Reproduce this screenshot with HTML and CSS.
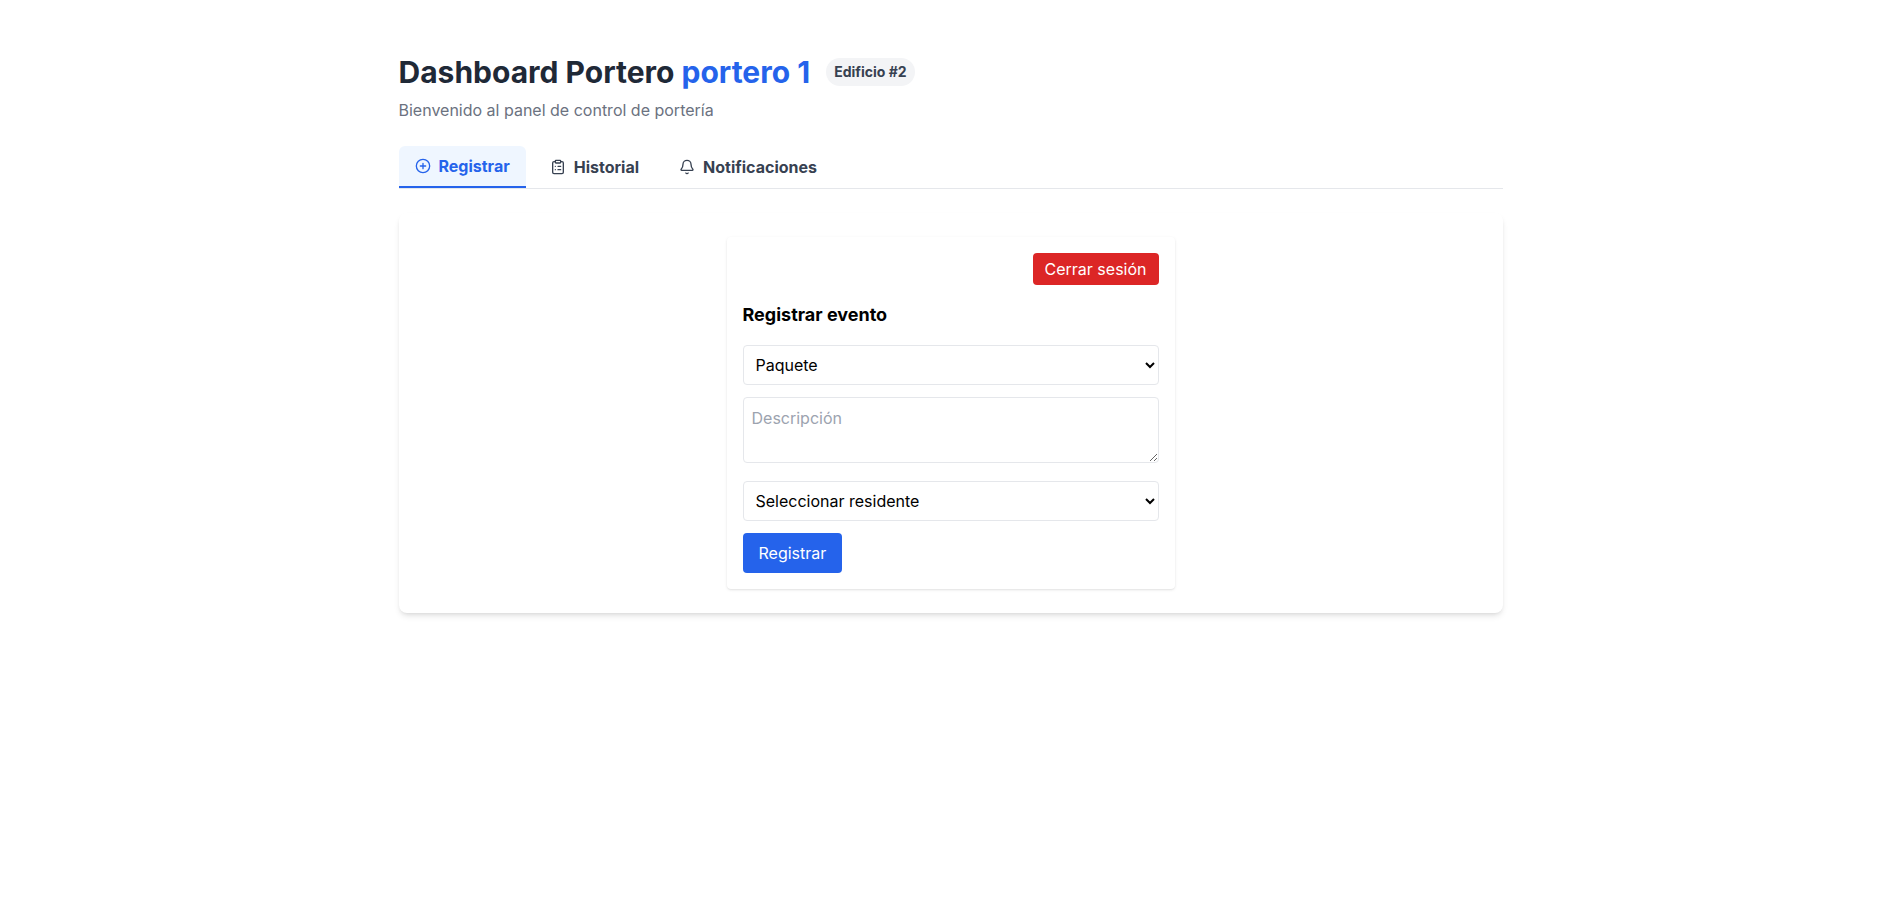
FILE: index.html
```html
<!DOCTYPE html>
<html lang="es">
<head>
<meta charset="utf-8">
<title>Dashboard Portero</title>
<link rel="stylesheet" href="styles.css">
</head>
<body>
<main class="page">
  <header class="header">
    <div class="title-row">
      <h1 class="title">Dashboard Portero <span class="title-name">portero 1</span></h1>
      <span class="badge">Edificio #2</span>
    </div>
    <p class="subtitle">Bienvenido al panel de control de portería</p>
  </header>
  <nav class="tabs">
    <button class="tab tab-active" type="button">
      <svg class="icon" viewBox="0 0 24 24"><circle cx="12" cy="12" r="10"/><path d="M12 8v8M8 12h8"/></svg>
      Registrar
    </button>
    <button class="tab" type="button">
      <svg class="icon" viewBox="0 0 24 24"><rect x="8" y="2" width="8" height="4" rx="1"/><path d="M16 4h2a2 2 0 0 1 2 2v14a2 2 0 0 1-2 2H6a2 2 0 0 1-2-2V6a2 2 0 0 1 2-2h2M12 11h4M12 16h4M8 11h.01M8 16h.01"/></svg>
      Historial
    </button>
    <button class="tab" type="button">
      <svg class="icon" viewBox="0 0 24 24"><path d="M10.268 21a2 2 0 0 0 3.464 0M3.262 15.326A1 1 0 0 0 4 17h16a1 1 0 0 0 .74-1.673C19.41 13.956 18 12.499 18 8A6 6 0 0 0 6 8c0 4.499-1.411 5.956-2.738 7.326"/></svg>
      Notificaciones
    </button>
  </nav>
  <section class="panel">
    <div class="card">
      <div class="card-top"><button class="logout" type="button">Cerrar sesión</button></div>
      <h2 class="card-title">Registrar evento</h2>
      <form class="form">
        <select class="field select"><option>Paquete</option></select>
        <textarea class="field area" placeholder="Descripción" rows="2"></textarea>
        <select class="field select"><option>Seleccionar residente</option></select>
        <button class="submit" type="button">Registrar</button>
      </form>
    </div>
  </section>
</main>
</body>
</html>
```
FILE: styles.css
```css
*, *::before, *::after { box-sizing: border-box; }
body {
  margin: 0;
  padding-left: 8px;
  background: #fff;
  color: #000;
  font: 16px/24px Inter, "Liberation Sans", sans-serif;
}
h1, h2, p { margin: 0; }
button, select, textarea { margin: 0; font: inherit; color: inherit; }
button { border: 0; background: transparent; }

.page { max-width: 1152px; margin: 0 auto; padding: 54px 24px 24px; }
.header { margin-bottom: 24px; }
.title-row { display: flex; align-items: center; gap: 16px; height: 36px; }
.title { font-size: 30px; line-height: 36px; font-weight: 700; color: #1f2937; }
.title-name { color: #2563eb; }
.badge {
  padding: 4px 8px;
  border-radius: 999px;
  background: #f3f4f6;
  color: #374151;
  font-size: 14px;
  line-height: 20px;
  font-weight: 700;
}
.subtitle { margin-top: 8px; color: #6b7280; }

.tabs { display: flex; gap: 8px; margin-bottom: 24px; border-bottom: 1px solid #e5e7eb; }
.tab {
  display: flex;
  align-items: center;
  gap: 8px;
  padding: 8px 16px;
  border-radius: 6px 6px 0 0;
  color: #374151;
  font-weight: 700;
}
.tab-active { background: #eff6ff; color: #2563eb; border-bottom: 2px solid #2563eb; }
.icon {
  width: 16px;
  height: 16px;
  fill: none;
  stroke: currentColor;
  stroke-width: 2;
  stroke-linecap: round;
  stroke-linejoin: round;
}

.panel {
  padding: 24px;
  border-radius: 8px;
  background: #fff;
  box-shadow: 0 4px 6px -1px rgb(0 0 0 / .1), 0 2px 4px -2px rgb(0 0 0 / .1);
}
.card {
  max-width: 448px;
  margin: 0 auto;
  padding: 16px;
  border-radius: 4px;
  background: #fff;
  box-shadow: 0 1px 3px rgb(0 0 0 / .1), 0 1px 2px -1px rgb(0 0 0 / .1);
}
.card-top { display: flex; justify-content: flex-end; margin-bottom: 16px; }
.logout { padding: 4px 12px; border-radius: 4px; background: #dc2626; color: #fff; }
.card-title { margin-bottom: 16px; font-size: 18px; line-height: 28px; font-weight: 700; }
.form { display: flex; flex-direction: column; align-items: flex-start; }
.field {
  width: 100%;
  margin-bottom: 12px;
  padding: 8px;
  border: 1px solid #e5e7eb;
  border-radius: 4px;
  background: #fff;
}
.select { height: 40px; }
.area { height: 66px; margin-bottom: 18px; resize: vertical; }
.area::placeholder { color: #9ca3af; }
.submit { padding: 8px 16px; border-radius: 4px; background: #2563eb; color: #fff; }
```
